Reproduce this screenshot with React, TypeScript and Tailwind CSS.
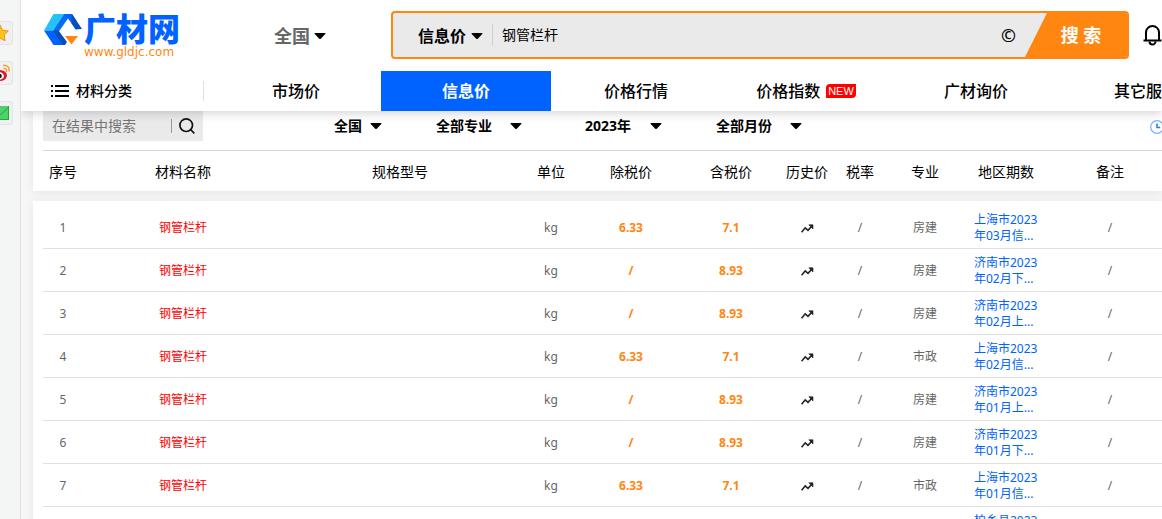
import { twJoin } from 'tailwind-merge';

const navItems = [
  { label: '市场价' },
  { label: '信息价', active: true },
  { label: '价格行情' },
  { label: '价格指数', isNew: true },
  { label: '广材询价' },
  { label: '其它服务' },
];

const filters = [
  { name: '地区', value: '全国', gap: 'gap-2' },
  { name: '专业', value: '全部专业', gap: 'gap-[18px]' },
  { name: '年份', value: '2023年', gap: 'gap-[18px]' },
  { name: '月份', value: '全部月份', gap: 'gap-[18px]' },
];

const columns = [
  { title: '序号', width: 'w-10' },
  { title: '材料名称', width: 'w-[200px]' },
  { title: '规格型号', width: '' },
  { title: '单位', width: 'w-[68px]' },
  { title: '除税价', width: 'w-[92px]' },
  { title: '含税价', width: 'w-[108px]' },
  { title: '历史价', width: 'w-11' },
  { title: '税率', width: 'w-[62px]' },
  { title: '专业', width: 'w-[68px]' },
  { title: '地区期数', width: 'w-[94px]' },
  { title: '备注', width: 'w-[114px]' },
];

const rows = [
  { net: '6.33', gross: '7.1', major: '房建', period: ['上海市2023', '年03月信...'] },
  { net: '/', gross: '8.93', major: '房建', period: ['济南市2023', '年02月下...'] },
  { net: '/', gross: '8.93', major: '房建', period: ['济南市2023', '年02月上...'] },
  { net: '6.33', gross: '7.1', major: '市政', period: ['上海市2023', '年02月信...'] },
  { net: '/', gross: '8.93', major: '房建', period: ['济南市2023', '年01月上...'] },
  { net: '/', gross: '8.93', major: '房建', period: ['济南市2023', '年01月下...'] },
  { net: '6.33', gross: '7.1', major: '市政', period: ['上海市2023', '年01月信...'] },
  { net: '/', gross: '8.93', major: '房建', period: ['柏乡县2023', '年01月信...'] },
];

function Caret() {
  return (
    <svg viewBox="0 0 12 7" className="pointer-events-none h-[7px] w-3 shrink-0" aria-hidden="true">
      <path d="M1.2 0h9.6q1.2 0 .5 1L7 5.6q-1 1-2 0L.7 1Q0 0 1.2 0z" />
    </svg>
  );
}

function Logo() {
  return (
    <a href="#" aria-label="广材网" className="flex w-[231px] shrink-0 pl-[23px]">
      <svg viewBox="0 0 38 32" className="mt-[14px] h-8 w-[38px] shrink-0" aria-hidden="true">
        <path d="M9.500 0H20L9 16.500H0z" fill="#22c3fb" />
        <path d="M20 0h3l1 4.500L14.500 18 9 16.500z" fill="#0a6cf5" />
        <path d="M0 16.500h10L20 31H9.500z" fill="#0062ff" />
        <path d="M9 16.500h5.500L23 28l-2 3h-2z" fill="#0a4fb8" />
        <path d="M20 0h8l5 7.500-4.500 3L24 4.500z" fill="#0062ff" />
        <path d="m28 0 10 15-6.500.5-4-6z" fill="#0a4fb8" />
        <path d="M21 22h13l-6.500 8.500z" fill="#ff8610" />
      </svg>
      <span className="mt-3 flex flex-col pl-[2px]">
        <span className="text-[32px] leading-[34px] font-black text-[#0062ff]">广材网</span>
        <span className="font-['DejaVu_Sans'] text-xs leading-3 text-[#ff8610]">www.gldjc.com</span>
      </span>
    </a>
  );
}

function SearchBar() {
  return (
    <form className="mt-[11px] flex h-12 min-w-0 flex-1 items-center overflow-hidden rounded border-2 border-[#ff8610] bg-[#eaeaea]">
      <label className="flex items-center gap-1 pt-[2px] pl-[25px]">
        <select
          aria-label="搜索类型"
          className="appearance-none text-base leading-6 font-bold outline-none"
        >
          <option>信息价</option>
        </select>
        <Caret />
      </label>
      <span className="ml-[9px] h-[22px] w-px bg-[#cfcfcf]" />
      <input
        aria-label="搜索材料"
        defaultValue="钢管栏杆"
        className="min-w-0 flex-1 pl-[9px] text-sm leading-5 outline-none"
      />
      <span className="mr-[9px] text-lg leading-5 font-medium">©</span>
      <button
        type="button"
        className="h-full w-[102px] shrink-0 bg-[#ff8610] pl-[10px] text-lg font-bold text-white [clip-path:polygon(22px_0,100%_0,100%_100%,0_100%)]"
      >
        搜 索
      </button>
    </form>
  );
}

function Header() {
  return (
    <header className="relative z-10 bg-white shadow-[0_2px_10px_rgba(0,0,0,0.18)]">
      <div className="flex h-[71px] items-start overflow-hidden">
        <Logo />
        <label className="flex w-[139px] shrink-0 items-center gap-1 pt-6 pl-[22px]">
          <select
            aria-label="地区"
            className="appearance-none text-lg leading-6 font-bold text-[#666] outline-none"
          >
            <option>全国</option>
          </select>
          <Caret />
        </label>
        <SearchBar />
        <button
          type="button"
          aria-label="消息"
          className="flex w-[33px] shrink-0 overflow-hidden pt-6 pl-[14px]"
        >
          <svg
            viewBox="0 0 20 22"
            className="h-[22px] w-5 shrink-0"
            fill="none"
            stroke="#000"
            strokeWidth="2"
            aria-hidden="true"
          >
            <path d="M.5 16.500h18M3 16V8.500a6.500 6.500 0 0 1 13 0V16" />
            <path d="M6.500 17.500a3 3 0 0 0 6 0" />
          </svg>
        </button>
      </div>
      <nav className="flex h-10 items-center overflow-hidden">
        <div className="mr-[7px] flex w-[183px] shrink-0 pl-[30px]">
          <button
            type="button"
            className="flex h-5 w-full items-center gap-[7px] border-r border-[#e0e0e0] text-sm font-medium"
          >
            <svg viewBox="0 0 18 12" className="h-3 w-[18px]" aria-hidden="true">
              <path d="M4 0h14v2H4zM4 5h14v2H4zM4 10h14v2H4zM0 0h2v2H0zM0 5h2v2H0zM0 10h2v2H0z" />
            </svg>
            材料分类
          </button>
        </div>
        {navItems.map((item) => (
          <a
            key={item.label}
            href="#"
            className={twJoin(
              'flex h-10 w-[170px] shrink-0 items-center justify-center gap-[6px] text-base',
              item.active ? 'bg-[#0062ff] font-bold text-white' : 'font-medium text-black',
            )}
          >
            {item.label}
            {item.isNew && (
              <span className="rounded-tl rounded-br bg-[#f00] px-[2px] font-['Liberation_Sans'] text-[11px] leading-[14px] text-white">
                NEW
              </span>
            )}
          </a>
        ))}
      </nav>
    </header>
  );
}

function FilterBar() {
  return (
    <div className="ml-[10px] flex h-10 border-b border-[#d8d8d8]">
      <form className="flex h-[30px] w-40 shrink-0 items-center bg-[#eaeaea]">
        <input
          aria-label="在结果中搜索"
          placeholder="在结果中搜索"
          className="w-32 pl-[9px] text-sm leading-5 outline-none placeholder:text-[#757575]"
        />
        <span className="h-[14px] w-px bg-[#999]" />
        <button type="button" aria-label="搜索" className="pl-[7px]">
          <svg
            viewBox="0 0 16 16"
            className="size-4"
            fill="none"
            stroke="#111"
            strokeWidth="1.700"
            aria-hidden="true"
          >
            <circle cx="7.200" cy="7.200" r="6.300" />
            <path d="m11.500 11.500 3.800 3.800" />
          </svg>
        </button>
      </form>
      <div className="ml-[39px] flex h-[30px] shrink-0 items-center">
        {filters.map((filter) => (
          <label
            key={filter.name}
            className={twJoin('flex w-[140px] items-center justify-end', filter.gap)}
          >
            <select
              aria-label={filter.name}
              className="appearance-none text-sm leading-5 font-bold outline-none"
            >
              <option>{filter.value}</option>
            </select>
            <Caret />
          </label>
        ))}
      </div>
      <button
        type="button"
        aria-label="更新时间"
        className="ml-auto flex w-3 shrink-0 items-center overflow-hidden"
      >
        <svg viewBox="0 0 14 14" className="mb-2 size-[14px] shrink-0" fill="none" aria-hidden="true">
          <circle cx="7" cy="7" r="6.300" stroke="#7fb0fb" strokeWidth="1.200" />
          <path d="M7 3.500V7.500h3.200" stroke="#2a78f0" strokeWidth="1.500" />
        </svg>
      </button>
    </div>
  );
}

function Columns() {
  return (
    <colgroup>
      {columns.map((column) => (
        <col key={column.title} className={column.width} />
      ))}
    </colgroup>
  );
}

function TrendIcon() {
  return (
    <svg
      viewBox="0 0 13 9"
      className="mx-auto h-[9px] w-[13px]"
      fill="none"
      stroke="#222"
      strokeWidth="1.600"
      aria-hidden="true"
    >
      <path d="m.6 8.200 3.600-4.400 2.800 2.600L11 2" />
      <path d="M7.800.8H12v4.200z" fill="#222" strokeWidth=".6" />
    </svg>
  );
}

export default function App() {
  return (
    <div className="flex h-screen overflow-hidden bg-[#f7f7f7] font-['Noto_Sans','Noto_Sans_CJK_SC',sans-serif] text-black">
      <aside className="flex w-[21px] shrink-0 flex-col gap-4 overflow-hidden border-r border-[#dfe3e2] bg-[#f4f6f5] pt-[21px]">
        <a
          href="#"
          aria-label="收藏"
          className="flex h-6 w-[13px] items-center justify-end overflow-hidden rounded-r border border-l-0 border-[#e4e4e4] bg-[#f0f0f0] pr-[3px]"
        >
          <svg viewBox="0 0 18 18" className="size-[18px] shrink-0" aria-hidden="true">
            <path
              d="m9 1 2.500 5.300 5.800.7-4.200 4 1 5.800L9 14l-5.100 2.800 1-5.800-4.200-4 5.800-.7z"
              fill="#ffc61a"
              stroke="#f08c1c"
            />
          </svg>
        </a>
        <a
          href="#"
          aria-label="微博"
          className="flex h-6 w-[13px] items-center justify-end overflow-hidden rounded-r border border-l-0 border-[#e4e4e4] bg-[#f0f0f0] pr-[2px]"
        >
          <svg viewBox="0 0 18 18" className="size-[18px] shrink-0" fill="none" aria-hidden="true">
            <ellipse cx="7.500" cy="11.500" rx="7.500" ry="5.500" fill="#e6162d" />
            <ellipse cx="7" cy="12" rx="5" ry="3.700" fill="#fff" />
            <circle cx="7.500" cy="12" r="2.300" fill="#111" />
            <path d="M11.500 4.500q3.500-.5 3 3.500M11 1.500q7-.5 6 6" stroke="#f79b1e" strokeWidth="1.300" />
          </svg>
        </a>
        <a
          href="#"
          aria-label="邮件"
          className="flex h-6 w-[13px] items-center justify-end overflow-hidden rounded-r border border-l-0 border-[#e4e4e4] bg-[#f0f0f0] pr-[3px]"
        >
          <svg viewBox="0 0 18 14" className="h-[14px] w-[18px] shrink-0" aria-hidden="true">
            <path d="M0 0h18v14H0z" fill="#4fd069" />
            <path d="m0 1 9 8 9-8M0 13.500h18M17.500 0v14" fill="none" stroke="#22a847" />
          </svg>
        </a>
      </aside>

      <div className="min-w-0 flex-1 overflow-hidden">
        <Header />
        <main className="pl-3">
          <section className="bg-white shadow-[0_2px_10px_rgba(0,0,0,0.08)]">
            <FilterBar />
            <div className="overflow-hidden pl-[10px]">
              <table className="w-full min-w-[1124px] table-fixed">
                <Columns />
                <thead>
                  <tr className="h-10 text-sm leading-5">
                    {columns.map((column) => (
                      <th key={column.title} className="pt-[2px] font-normal whitespace-nowrap">
                        {column.title}
                      </th>
                    ))}
                  </tr>
                </thead>
              </table>
            </div>
          </section>

          <section className="mt-[10px] overflow-hidden bg-white pt-[5px] pl-[10px] shadow-[0_2px_10px_rgba(0,0,0,0.08)]">
            <table className="w-full min-w-[1124px] table-fixed border-separate border-spacing-0">
              <Columns />
              <tbody className="text-center text-xs leading-4 text-[#666]">
                {rows.map((row, index) => (
                  <tr key={index} className="h-[43px] *:border-b *:border-[#e0e0e0] *:pt-[2px]">
                    <td>{index + 1}</td>
                    <td>
                      <a href="#" className="text-[#f00]">
                        钢管栏杆
                      </a>
                    </td>
                    <td />
                    <td>kg</td>
                    <td className="font-bold text-[#ff8610]">{row.net}</td>
                    <td className="font-bold text-[#ff8610]">{row.gross}</td>
                    <td>
                      <TrendIcon />
                    </td>
                    <td>/</td>
                    <td>{row.major}</td>
                    <td className="pl-[15px] text-left whitespace-nowrap">
                      <a href="#" className="text-[#0062ff]">
                        <span className="block">{row.period[0]}</span>
                        <span className="block">{row.period[1]}</span>
                      </a>
                    </td>
                    <td>/</td>
                  </tr>
                ))}
              </tbody>
            </table>
          </section>
        </main>
      </div>
    </div>
  );
}
